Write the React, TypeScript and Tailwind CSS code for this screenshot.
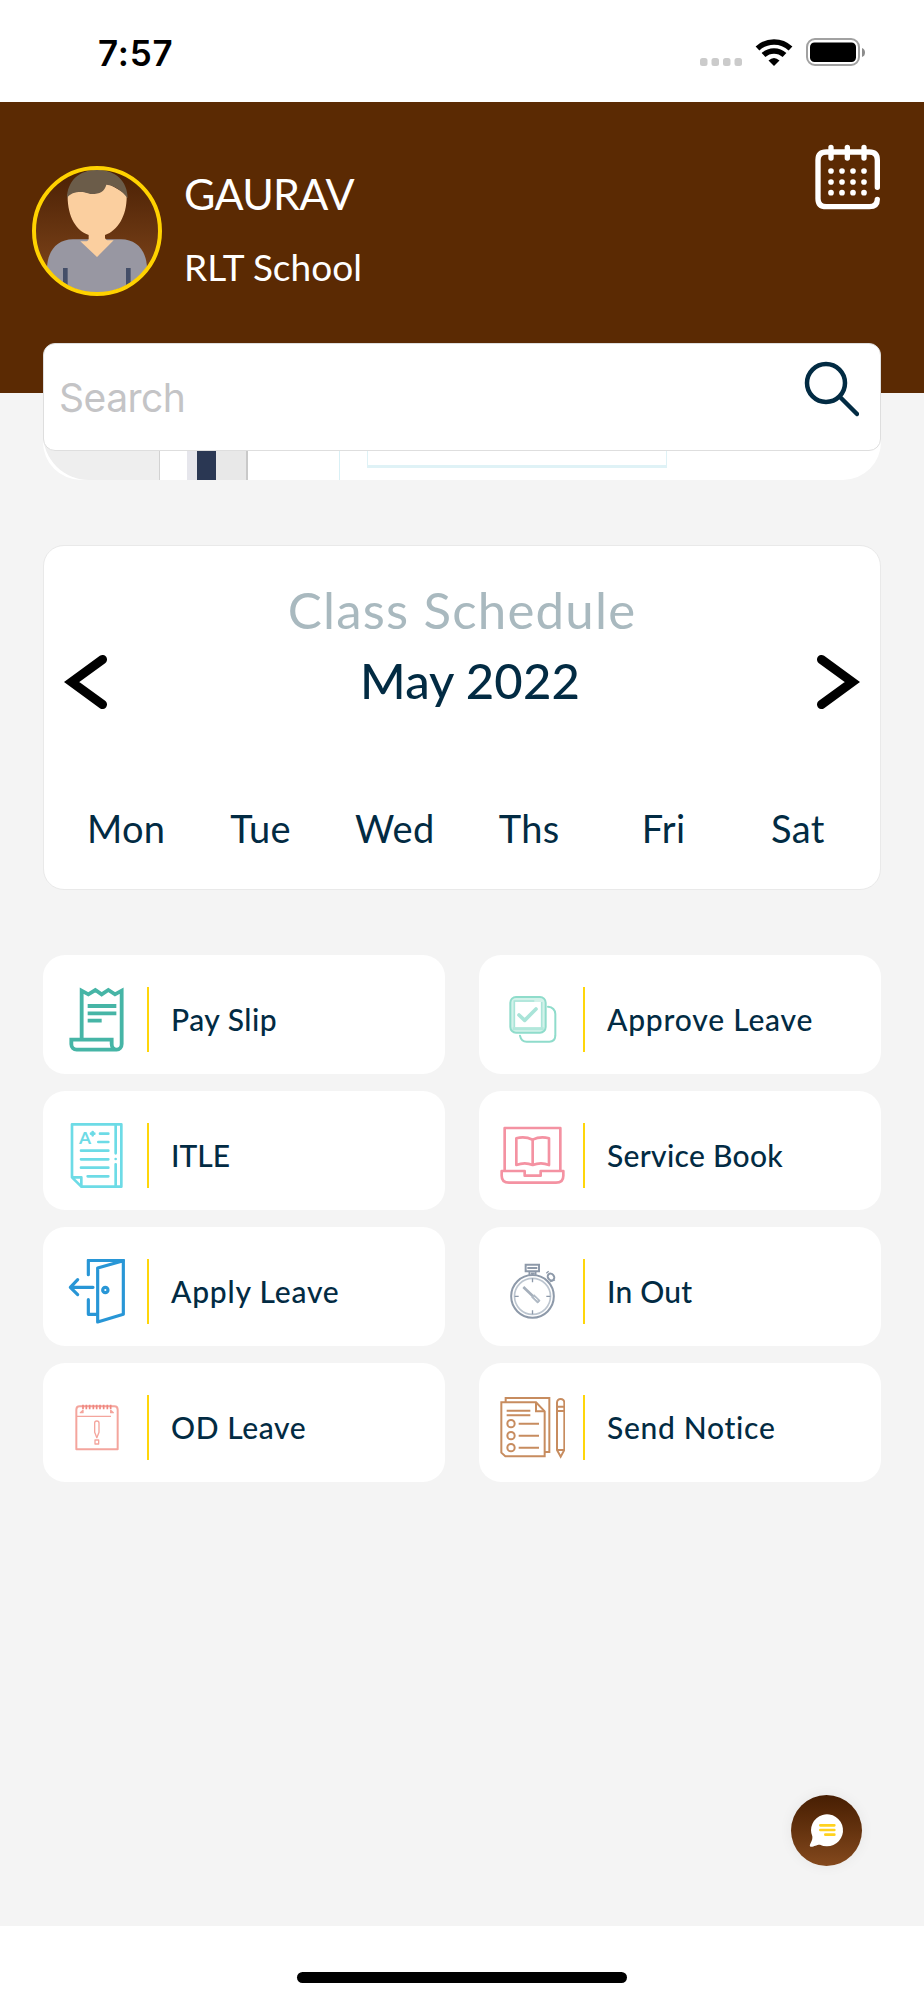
import type { ReactNode } from "react";

const days = ["Mon", "Tue", "Wed", "Ths", "Fri", "Sat"];

function Icon({ children, color }: { children: ReactNode; color: string }) {
  return (
    <svg
      viewBox="0 0 195 195"
      className="h-[65px] w-[65px] shrink-0"
      fill="none"
      stroke={color}
      aria-hidden
    >
      {children}
    </svg>
  );
}

function PaySlipIcon() {
  return (
    <Icon color="#46b5a6">
      <g strokeWidth="11.500">
        <path d="M53 156V11l20 11 21-13 19 13 20-13 20 13 20-11v160a15 17 0 0 1-30 0v-13H22v14a16 16 0 0 0 16 16h120" />
        <path d="M71 57h86M71 79h86M71 101h42" />
      </g>
    </Icon>
  );
}

function ItleIcon() {
  return (
    <Icon color="#6ddbe6">
      <g strokeWidth="8" strokeLinejoin="round" strokeLinecap="round">
        <path d="M24 4h148v187H52L24 163zM24 163h28v28" />
        <path d="M155 4v87M155 108v.1M155 124v67" />
        <path d="M108 32h25M103 57h30M51 83h82M51 109h82M51 134h82M71 160h62" />
        <path d="M86 27v10M81 32h10" />
      </g>
      <text
        x="45"
        y="64"
        fontSize="52"
        fontWeight="700"
        fill="#6ddbe6"
        stroke="none"
        className="font-['Lato']"
      >
        A
      </text>
    </Icon>
  );
}

function ApplyLeaveIcon() {
  return (
    <Icon color="#2896d6">
      <g strokeWidth="9.500" strokeLinejoin="round" strokeLinecap="round">
        <path d="M73 47V4h105M73 122v44h26" />
        <path d="M101 27l77-22v161l-77 23z" />
        <circle cx="124" cy="93" r="8" />
        <path d="M87 85H20M41 62L19 85l22 22" />
      </g>
    </Icon>
  );
}

function OdLeaveIcon() {
  return (
    <Icon color="#f4a59d">
      <g strokeWidth="6" strokeLinejoin="round">
        <path d="M37 163V44q0-10 10-10h104q10 0 10 10v119z" />
        <path d="M92 84q0-6 6.500-6t6.500 6v28l-6.500 16-6.500-16z" strokeWidth="4" />
        <path d="M93 135h11v12H93z" strokeWidth="4" />
        <path d="M38 64h103" strokeWidth="4" />
        <path d="M49 53l8-7v7zM148 53l-8-7v7z" strokeWidth="4" />
      </g>
      <path
        d="M57 29v14M67 29v14M77 29v14M88 29v14M98 29v14M108 29v14M119 29v14M130 29v14M140 29v14"
        stroke="#ef8780"
        strokeWidth="5"
      />
    </Icon>
  );
}

function ApproveLeaveIcon() {
  return (
    <Icon color="#8fdccb">
      <rect x="31" y="30" width="106" height="107" rx="17" fill="#d3f2ea" stroke="none" />
      <rect x="45" y="45" width="80" height="76" fill="#fff" stroke="none" />
      <path d="M38 125h93" stroke="#b2e7db" strokeWidth="9" />
      <rect x="31" y="30" width="106" height="107" rx="17" strokeWidth="6" />
      <path d="M43 121V42h60" stroke="#a9e4d8" strokeWidth="5" />
      <path d="M125 45v76" stroke="#a9e4d8" strokeWidth="5" />
      <path
        d="M57 84l17 16 34-34"
        stroke="#a9e4d8"
        strokeWidth="11"
        strokeLinecap="round"
        strokeLinejoin="round"
      />
      <path
        d="M144 59q21 2 22 22v65q-1 18-18 18H80q-16 0-20-18"
        strokeWidth="6"
        strokeLinecap="round"
      />
    </Icon>
  );
}

function ServiceBookIcon() {
  return (
    <Icon color="#f492a2">
      <g strokeWidth="8" strokeLinejoin="round" strokeLinecap="round">
        <path d="M14 143V15h167v128" />
        <path d="M5 144h69v14h48v-14h68v14q0 21-22 21H27q-22 0-22-21z" />
        <path d="M98 50q-24-11-49-4v80q26-10 49 0 25-10 49 0V46q-26-7-49 4v76" />
      </g>
    </Icon>
  );
}

function InOutIcon() {
  return (
    <Icon color="#8d99a9">
      <circle cx="97.500" cy="112" r="64" strokeWidth="6" />
      <circle cx="97.500" cy="112" r="54" strokeWidth="5" stroke="#bcc5cf" />
      <path d="M97.500 58v12M97.500 154v12M44 112h12M139 112h12" strokeWidth="4" />
      <path d="M77 17h40v20H77zM82 27h30" strokeWidth="6" />
      <path d="M88 37v11M107 37v11M92 43h12" strokeWidth="5" />
      <ellipse cx="153" cy="54" rx="9" ry="11" strokeWidth="6" transform="rotate(-40 153 54)" />
      <path d="M139 43l7-6M165 63l-16 6" strokeWidth="4" />
      <path d="M70 84l47 45" stroke="#a5afbb" strokeWidth="8" />
      <path d="M98 110l19 19" stroke="#b0bac5" strokeWidth="13" />
      <path d="M103 115l10 9" stroke="#fff" strokeWidth="3" />
    </Icon>
  );
}

function SendNoticeIcon() {
  return (
    <Icon color="#c78c5f">
      <g strokeWidth="6">
        <path d="M4 22h104l26 27v135H16L4 173z" />
        <path d="M108 22v27h26M17 22V9h131v162h-13" />
        <path d="M20 47h71M20 61h71M56 86h61M56 122h61M56 158h61" />
        <circle cx="33" cy="86" r="11" />
        <circle cx="33" cy="122" r="11" />
        <circle cx="33" cy="158" r="11" />
        <path d="M171 165V23a11 11 0 0 1 22 0v142l-11 20zM171 165h22M171 35h22M171 48h22" />
      </g>
    </Icon>
  );
}

const menu = [
  { label: "Pay Slip", icon: <PaySlipIcon />, tracking: "tracking-[0.5px]" },
  { label: "Approve Leave", icon: <ApproveLeaveIcon />, tracking: "tracking-[0.8px]" },
  { label: "ITLE", icon: <ItleIcon />, tracking: "tracking-[0px]" },
  { label: "Service Book", icon: <ServiceBookIcon />, tracking: "tracking-[0.3px]" },
  { label: "Apply Leave", icon: <ApplyLeaveIcon />, tracking: "tracking-[0.8px]" },
  { label: "In Out", icon: <InOutIcon />, tracking: "tracking-[0.2px]" },
  { label: "OD Leave", icon: <OdLeaveIcon />, tracking: "tracking-[0.6px]" },
  { label: "Send Notice", icon: <SendNoticeIcon />, tracking: "tracking-[0.7px]" },
];

function StatusBar() {
  return (
    <div className="flex h-[102px] items-start justify-between bg-white pr-[58px] pl-[98px]">
      <span className="mt-[32px] font-['Inter',sans-serif] text-[35px] leading-[42px] font-semibold tracking-[0.8px] text-black">
        7:57
      </span>
      <svg viewBox="0 0 166 30" className="mt-[37px] h-[30px] w-[166px]" aria-hidden>
        <g fill="#cbcbcb">
          <rect x="0" y="21" width="7.500" height="8" rx="2.500" />
          <rect x="11.500" y="21" width="7.500" height="8" rx="2.500" />
          <rect x="23" y="21" width="7.500" height="8" rx="2.500" />
          <rect x="34.500" y="21" width="7.500" height="8" rx="2.500" />
        </g>
        <g fill="none" stroke="#000" strokeWidth="5.500">
          <path d="M57.500 11.500a24 24 0 0 1 33 0" />
          <path d="M63.500 18a15.500 15.500 0 0 1 21 0" />
        </g>
        <path d="M68.500 23.500q5.500-5 11 0L74 29z" />
        <rect x="107" y="2" width="52" height="26" rx="8" fill="none" stroke="#a1a1a1" strokeWidth="2" />
        <rect x="110" y="5.500" width="46" height="19.500" rx="4.500" />
        <path d="M162 11q3 1 3 4.500t-3 4.500z" fill="#8c8c8c" />
      </svg>
    </div>
  );
}

function Avatar() {
  return (
    <svg viewBox="0 0 390 390" className="h-[130px] w-[130px] shrink-0" aria-hidden>
      <defs>
        <linearGradient id="avatarBg" x1="0" y1="0" x2="0" y2="1">
          <stop offset="0" stopColor="#4a2004" />
          <stop offset="1" stopColor="#84491d" />
        </linearGradient>
        <clipPath id="avatarClip">
          <circle cx="195" cy="195" r="185" />
        </clipPath>
      </defs>
      <circle cx="195" cy="195" r="188" fill="url(#avatarBg)" />
      <g clipPath="url(#avatarClip)">
        <path
          d="M45 310c0-55 30-90 78-90h144c48 0 78 35 78 90v80H45z"
          fill="#9897a2"
        />
        <path
          d="M107 85c-2 65 25 110 63 122v12q-1 7-10 7h-15l50 47 50-50h-15q-9 0-11-8v-8c40-14 67-60 65-122l-60-35-60 15z"
          fill="#fbcf9f"
        />
        <path
          d="M105 97c0-50 35-86 90-86s92 34 92 86c-16-22-38-38-64-41-5 20-20 28-43 28-12 0-18-6-34-6s-33 4-41 19z"
          fill="#6b5c49"
        />
        <path d="M93 306h14v70H93zM282 306h14v70h-14z" fill="#444e68" />
      </g>
      <circle cx="195" cy="195" r="189" fill="none" stroke="#ffd200" strokeWidth="12" />
    </svg>
  );
}

function CalendarIcon() {
  return (
    <svg viewBox="0 0 198 198" className="h-[66px] w-[66px]" fill="none" aria-hidden>
      <path
        d="M187 130V48q0-24-24-24H34Q9 24 9 48v116q0 24 25 24h129q24 0 24-22"
        stroke="#fff"
        strokeWidth="16"
        strokeLinecap="round"
      />
      <path d="M48 10v32M97 10v32M147 10v32" stroke="#fff" strokeWidth="16" strokeLinecap="round" />
      <g fill="#fff">
        {[81, 114, 146].map((y) =>
          [48, 81, 114, 147].map((x) => <circle key={`${x}-${y}`} cx={x} cy={y} r="8.500" />),
        )}
      </g>
    </svg>
  );
}

function Header() {
  return (
    <header className="flex h-[291px] items-start bg-[#5b2a03] pr-[43px] pl-[32px]">
      <div className="mt-[64px]">
        <Avatar />
      </div>
      <div className="mt-[64px] ml-[22px] flex-1 text-white">
        <h1 className="text-[43px] leading-[56px] font-normal tracking-[-0.7px]">GAURAV</h1>
        <p className="mt-[21px] text-[37px] leading-[48px] font-normal">RLT School</p>
      </div>
      <div className="mt-[42px]">
        <CalendarIcon />
      </div>
    </header>
  );
}

function SearchBar() {
  return (
    <div className="relative z-10 -mt-[50px] flex h-[108px] items-start justify-between rounded-[12px] border border-[#dedede] bg-white pr-[21px] pl-[15px]">
      <span className="mt-[30px] font-['Inter',sans-serif] text-[39px] leading-[48px] tracking-[-0.5px] text-[#c4c4c6]">
        Search
      </span>
      <svg
        viewBox="0 0 56 56"
        className="mt-[17px] h-[56px] w-[56px]"
        fill="none"
        stroke="#022b43"
        strokeWidth="4.500"
        strokeLinecap="round"
        aria-hidden
      >
        <circle cx="23" cy="22" r="19" />
        <path d="M37 36l17 17" />
      </svg>
    </div>
  );
}

// bottom edge of the banner that scrolls behind the search bar
function Banner() {
  return (
    <div className="-mt-[40px] flex h-[69px] overflow-hidden rounded-b-[38px] bg-white">
      <div className="w-[117px] rounded-bl-[46px] border-r border-[#d2d2d2] bg-[#eeeeee]" />
      <div className="ml-[27px] w-[10px] bg-[#e6e6ec]" />
      <div className="w-[19px] bg-[#2a3753]" />
      <div className="w-[32px] border-r-2 border-[#c9c9c9] bg-[#e8e8e8]" />
      <div className="ml-[91px] w-px bg-[#d9f0f5]" />
      <div className="ml-[27px] h-[57px] w-[300px] border-x border-b-3 border-[#dff2f6]" />
    </div>
  );
}

function Chevron({ flip = false }: { flip?: boolean }) {
  return (
    <svg
      viewBox="0 0 44 56"
      className={flip ? "h-[56px] w-[44px] -scale-x-100" : "h-[56px] w-[44px]"}
      fill="none"
      stroke="#000"
      strokeWidth="9"
      aria-hidden
    >
      <path d="M38.500 5.500L7.500 28l31 22.500" strokeLinecap="round" />
    </svg>
  );
}

function Schedule() {
  return (
    <section className="mt-[65px] h-[345px] rounded-[21px] border border-[#e9e9e9] bg-white px-[15px] text-[#022b43]">
      <h2 className="mt-[32px] text-center text-[51px] leading-[64px] tracking-[1.2px] text-[#a9b9bf]">
        Class Schedule
      </h2>
      <div className="mt-[6px] flex items-center justify-between px-[5px]">
        <div className="pt-[4px]">
          <Chevron />
        </div>
        <span className="pl-[16px] text-[49px] leading-[64px] font-medium tracking-[0.1px]">
          May 2022
        </span>
        <div className="pt-[4px]">
          <Chevron flip />
        </div>
      </div>
      <div className="mt-[92px] grid grid-cols-6 text-center text-[38px] leading-[48px] tracking-[0.3px]">
        {days.map((day) => (
          <span key={day}>{day}</span>
        ))}
      </div>
    </section>
  );
}

function Menu() {
  return (
    <nav className="mt-[65px] grid grid-cols-2 gap-x-[34px] gap-y-[17px]">
      {menu.map(({ label, icon, tracking }) => (
        <a
          key={label}
          className="flex h-[119px] items-center rounded-[22px] bg-white pt-[10px] pl-[21px] text-[#022b43]"
        >
          {icon}
          <span className="ml-[18px] h-[65px] w-[2px] bg-[#ffd60a]" />
          <span className={`ml-[22px] pb-[2px] text-[30px] leading-[38px] font-medium ${tracking}`}>
            {label}
          </span>
        </a>
      ))}
    </nav>
  );
}

function ChatButton() {
  return (
    <button className="absolute right-[62px] bottom-[60px] h-[71px] w-[71px] rounded-full bg-linear-to-b from-[#471e03] to-[#84491d] shadow-[0_0_14px_rgba(0,0,0,0.06)]">
      <svg viewBox="0 0 213 213" className="h-[71px] w-[71px]" aria-hidden>
        <path
          d="M60 106a48 48 0 1 1 27 43c-12 0-16 6-27 6-5 0-4-5-2-9 5-9 7-15 6-22a48 48 0 0 1-4-18z"
          fill="#fff"
        />
        <path
          d="M88 91h42M88 105h42M103 119h27"
          stroke="#ffd21f"
          strokeWidth="8"
          strokeLinecap="round"
        />
      </svg>
    </button>
  );
}

export default function App() {
  return (
    <div className="flex h-[2000px] w-[924px] flex-col bg-white font-['Lato','Open_Sans',sans-serif]">
      <StatusBar />
      <Header />
      <main className="relative flex-1 bg-[#f4f4f4] px-[43px]">
        <SearchBar />
        <Banner />
        <Schedule />
        <Menu />
        <ChatButton />
      </main>
      <footer className="flex h-[74px] justify-center bg-white pt-[46px]">
        <div className="h-[11px] w-[330px] rounded-full bg-black" />
      </footer>
    </div>
  );
}
